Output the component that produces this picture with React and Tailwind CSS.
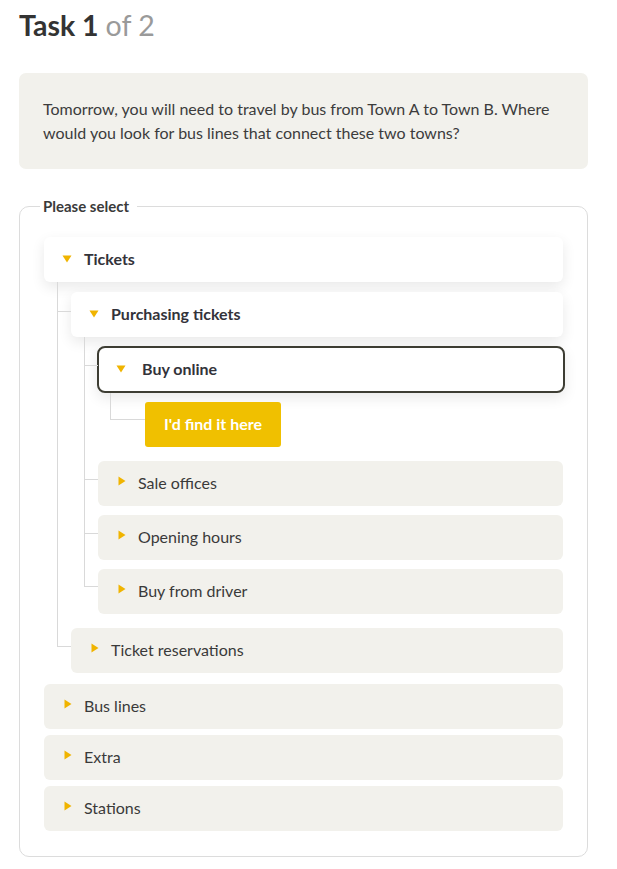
const font = { fontFamily: 'Lato, "Open Sans", sans-serif' }

function Caret({ open }) {
  return open ? (
    <svg width="10" height="8" viewBox="0 0 10 8" className="shrink-0">
      <path d="M0.5 0.5 L9.5 0.5 L5 7.5 Z" fill="#f0b400" />
    </svg>
  ) : (
    <svg width="8" height="10" viewBox="0 0 8 10" className="shrink-0 -mt-[5px]">
      <path d="M0.5 0.5 L7.5 5 L0.5 9.5 Z" fill="#f0b400" />
    </svg>
  )
}

function Row({ label, open, active }) {
  if (active) {
    return (
      <div className="flex h-[47px] items-center gap-[16px] rounded-[8px] border-2 border-[#3d3d33] bg-white pl-[17px] ml-[-1px] mr-[-2px] shadow-[0_5px_14px_rgba(0,0,0,0.09)]">
        <Caret open />
        <span className="text-[16px] font-bold text-[#33333a]">{label}</span>
      </div>
    )
  }
  if (open) {
    return (
      <div className="flex h-[45px] items-center gap-[12px] rounded-[6px] bg-white pl-[18px] shadow-[0_5px_14px_rgba(0,0,0,0.09)]">
        <Caret open />
        <span className="text-[16px] font-bold text-[#33333a]">{label}</span>
      </div>
    )
  }
  return (
    <div className="flex h-[45px] items-center gap-[12px] rounded-[6px] bg-[#f2f1ec] pl-[20px]">
      <Caret />
      <span className="text-[16px] text-[#3a3a3a]">{label}</span>
    </div>
  )
}

// child wrapper with an elbow line; "last" stops the vertical line at the elbow
function Branch({ mt, last, elbow = 20, indent = 14, rise, children }) {
  return (
    <div className="relative" style={{ marginTop: mt, paddingLeft: indent }}>
      <span
        className="absolute left-0 border-l border-b border-[#d9d9d9]"
        style={{ top: -rise, height: rise + elbow, width: indent }}
      />
      {!last && <span className="absolute left-0 border-l border-[#d9d9d9]" style={{ top: elbow, bottom: -mt }} />}
      {children}
    </div>
  )
}

export default function App() {
  return (
    <div className="min-h-screen bg-white pl-[19px] pr-[29px] pt-[8px] pb-[14px]" style={font}>
      <h1 className="text-[28.5px] font-bold leading-[34px] text-[#333333]">
        Task 1 <span className="font-normal text-[#9a9a9a]">of 2</span>
      </h1>

      <div className="mt-[31px] rounded-[7px] bg-[#f2f1ec] px-[24px] py-[24px] text-[16px] leading-[24px] text-[#3c3c3c]">
        Tomorrow, you will need to travel by bus from Town A to Town B. Where would you look for bus lines that connect these two towns?
      </div>

      <fieldset className="mt-[26px] rounded-[10px] border border-[#dcdcdc] pl-[24px] pr-[24px] pb-[25px] pt-[19px]">
        <legend className="ml-[-4px] pl-[3px] pr-[8px] text-[15px] font-bold text-[#3a3a3a]">Please select</legend>

        <Row label="Tickets" open />
        <div className="ml-[13px]">
          <Branch mt={10} rise={10}>
            <Row label="Purchasing tickets" open />
            <div className="ml-[13px]">
              <Branch mt={9} rise={9}>
                <Row label="Buy online" active />
                <div className="ml-[12px]">
                  <Branch mt={9} rise={9} last elbow={18} indent={35}>
                    <button className="h-[45px] rounded-[3px] bg-[#f0c000] px-[19px] text-[16px] font-bold text-white">
                      I'd find it here
                    </button>
                  </Branch>
                </div>
              </Branch>
              <Branch mt={14} rise={14} elbow={19}>
                <Row label="Sale offices" />
              </Branch>
              <Branch mt={9} rise={9} elbow={19}>
                <Row label="Opening hours" />
              </Branch>
              <Branch mt={9} rise={9} last elbow={18}>
                <Row label="Buy from driver" />
              </Branch>
            </div>
          </Branch>
          <Branch mt={14} rise={14} last elbow={19}>
            <Row label="Ticket reservations" />
          </Branch>
        </div>

        <div className="mt-[11px] flex flex-col gap-[6px]">
          <Row label="Bus lines" />
          <Row label="Extra" />
          <Row label="Stations" />
        </div>
      </fieldset>
    </div>
  )
}
